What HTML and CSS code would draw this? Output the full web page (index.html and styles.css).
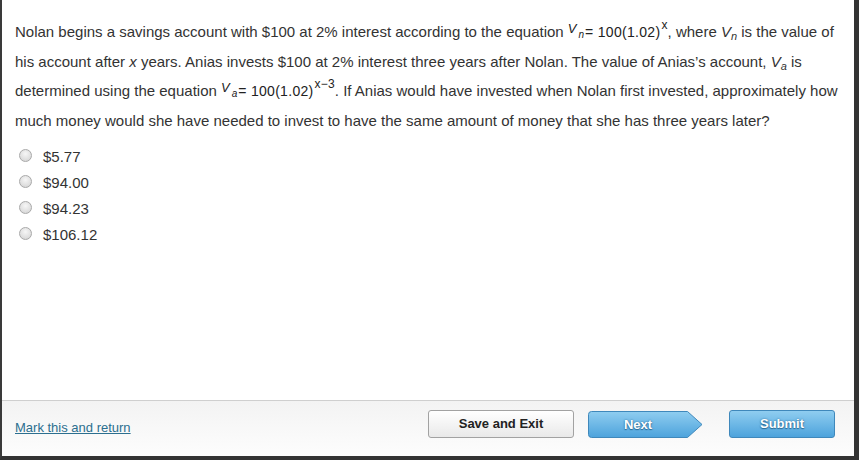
FILE: index.html
```html
<!DOCTYPE html>
<html>
<head>
<meta charset="utf-8">
<link rel="stylesheet" href="styles.css">
</head>
<body>
<div class="frame">
  <main class="content">
    <p class="question">Nolan begins a savings account with $100 at 2% interest according to the equation <span class="eq"><i class="ev">V</i><i class="es">n</i>=&nbsp;100(1.02)<span class="ep">x</span></span>, where <i>V</i><i class="vs">n</i> is the value of his account after <i>x</i> years. Anias invests $100 at 2% interest three years after Nolan. The value of Anias’s account, <i>V</i><i class="vs">a</i> is determined using the equation <span class="eq"><i class="ev">V</i><i class="es">a</i>=&nbsp;100(1.02)<span class="ep">x−3</span></span>. If Anias would have invested when Nolan first invested, approximately how much money would she have needed to invest to have the same amount of money that she has three years later?</p>
    <ul class="options">
      <li class="option"><span class="radio"></span><span class="label">$5.77</span></li>
      <li class="option"><span class="radio"></span><span class="label">$94.00</span></li>
      <li class="option"><span class="radio"></span><span class="label">$94.23</span></li>
      <li class="option"><span class="radio"></span><span class="label">$106.12</span></li>
    </ul>
  </main>
  <footer class="footer">
    <a class="mark" href="#">Mark this and return</a>
    <button class="btn btn-save">Save and Exit</button>
    <button class="btn btn-next">
      <svg class="next-shape" width="115" height="27" viewBox="0 0 115 27">
        <defs>
          <linearGradient id="ng" x1="0" y1="0" x2="0" y2="1">
            <stop offset="0" stop-color="#8fcdf0"/>
            <stop offset="1" stop-color="#4da3dc"/>
          </linearGradient>
        </defs>
        <path d="M3.5 0.5 H99.5 L114 13.5 L99.5 26.5 H3.5 Q0.5 26.5 0.5 23.5 V3.5 Q0.5 0.5 3.5 0.5 Z" fill="url(#ng)" stroke="#3f88bb" stroke-width="1"/>
      </svg>
      <span class="next-text">Next</span>
    </button>
    <button class="btn btn-submit">Submit</button>
  </footer>
</div>
</body>
</html>
```

FILE: styles.css
```css
html, body {
  margin: 0;
  padding: 0;
  background: #333;
}
body {
  width: 859px;
  height: 460px;
  overflow: hidden;
  font-family: "Liberation Sans", Arial, sans-serif;
  color: #333;
}
.frame {
  box-sizing: border-box;
  width: 859px;
  height: 460px;
  border-left: 2px solid #3a3a3a;
  border-right: 5px solid #333;
  border-bottom: 4px solid #333;
  background: #fff;
  display: flex;
  flex-direction: column;
}
.content {
  flex: 1;
  padding: 17px 6px 0 13px;
}
.question {
  margin: 0;
  font-size: 15px;
  line-height: 29px;
  color: #333;
}
.vs {
  display: inline-block;
  font-size: 11px;
  line-height: 10px;
  transform: translateY(3px);
}
.eq {
  color: #222;
  font-size: 14px;
  letter-spacing: 0.3px;
}
.ev {
  display: inline-block;
  font-size: 13px;
  line-height: 10px;
  transform: translateY(-4px);
  margin-right: 2px;
  letter-spacing: 0;
}
.es {
  display: inline-block;
  font-size: 10px;
  line-height: 10px;
  transform: translateY(1px);
  margin-right: 1px;
  letter-spacing: 0;
}
.ep {
  display: inline-block;
  font-size: 12px;
  line-height: 10px;
  transform: translateY(-8px);
  margin-left: 1px;
  letter-spacing: 0.2px;
}
.options {
  list-style: none;
  margin: 8px 0 0 0;
  padding: 0;
}
.option {
  display: flex;
  align-items: center;
  height: 26px;
  font-size: 15px;
  color: #333;
}
.radio {
  box-sizing: border-box;
  width: 13px;
  height: 13px;
  border-radius: 50%;
  margin-left: 4px;
  margin-right: 11px;
  border: 1px solid #a9a9a9;
  background: radial-gradient(circle at 50% 35%, #f6f6f6 0%, #dcdcdc 70%, #cfcfcf 100%);
  margin-top: -2px;
}
.footer {
  box-sizing: border-box;
  height: 56px;
  border-top: 1px solid #cfcfcf;
  background: linear-gradient(#f3f3f3, #fdfdfd);
  display: flex;
  align-items: center;
  padding: 0 19px 0 13px;
}
.mark {
  flex: 1;
  font-size: 13px;
  color: #2c6f8f;
  text-decoration: underline;
  margin-top: -3px;
}
.btn {
  box-sizing: border-box;
  height: 28px;
  font-family: "Liberation Sans", Arial, sans-serif;
  font-size: 13px;
  font-weight: bold;
  padding: 0;
  margin: 0;
  cursor: pointer;
}
.btn-save {
  width: 146px;
  border: 1px solid #a2a2a2;
  border-radius: 3px;
  background: linear-gradient(#ffffff, #e9e9e9);
  color: #222;
  margin-top: -10px;
}
.btn-next {
  position: relative;
  width: 115px;
  height: 27px;
  margin-left: 14px;
  border: none;
  background: none;
  color: #fff;
  margin-top: -9px;
}
.next-shape {
  position: absolute;
  left: 0;
  top: 0;
  display: block;
}
.next-text {
  position: relative;
  display: block;
  width: 100px;
  text-align: center;
  text-shadow: 0 0 2px #2a6a96, 0 1px 1px #2a6a96;
}
.btn-submit {
  width: 106px;
  margin-left: 26px;
  border: 1px solid #3f88bb;
  border-radius: 3px;
  background: linear-gradient(#8fcdf0, #4da3dc);
  color: #fff;
  text-shadow: 0 0 2px #2a6a96, 0 1px 1px #2a6a96;
  margin-top: -10px;
}
```
